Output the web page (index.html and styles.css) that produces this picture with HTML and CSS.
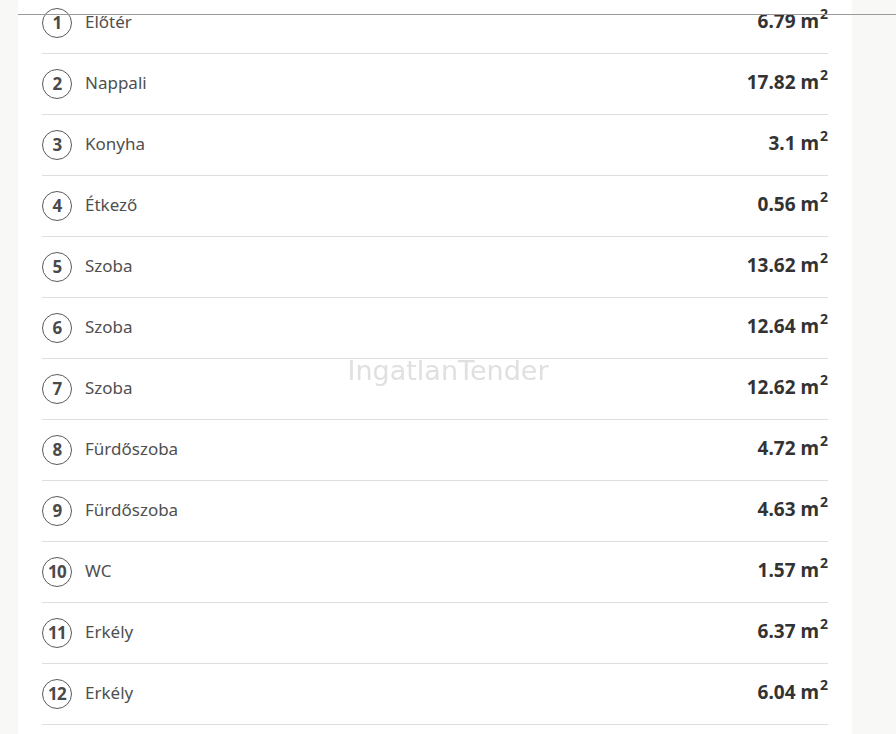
FILE: index.html
```html
<!DOCTYPE html>
<html lang="hu">
<head>
<meta charset="utf-8">
<link rel="stylesheet" href="styles.css">
</head>
<body>
<div class="page">
  <div class="card">
    <ul class="rooms">
      <li class="room"><span class="num">1</span><span class="name">Előtér</span><span class="area">6.79 m<sup>2</sup></span></li>
      <li class="room"><span class="num">2</span><span class="name">Nappali</span><span class="area">17.82 m<sup>2</sup></span></li>
      <li class="room"><span class="num">3</span><span class="name">Konyha</span><span class="area">3.1 m<sup>2</sup></span></li>
      <li class="room"><span class="num">4</span><span class="name">Étkező</span><span class="area">0.56 m<sup>2</sup></span></li>
      <li class="room"><span class="num">5</span><span class="name">Szoba</span><span class="area">13.62 m<sup>2</sup></span></li>
      <li class="room"><span class="num">6</span><span class="name">Szoba</span><span class="area">12.64 m<sup>2</sup></span></li>
      <li class="room"><span class="num">7</span><span class="name">Szoba</span><span class="area">12.62 m<sup>2</sup></span></li>
      <li class="room"><span class="num">8</span><span class="name">Fürdőszoba</span><span class="area">4.72 m<sup>2</sup></span></li>
      <li class="room"><span class="num">9</span><span class="name">Fürdőszoba</span><span class="area">4.63 m<sup>2</sup></span></li>
      <li class="room"><span class="num">10</span><span class="name">WC</span><span class="area">1.57 m<sup>2</sup></span></li>
      <li class="room"><span class="num">11</span><span class="name">Erkély</span><span class="area">6.37 m<sup>2</sup></span></li>
      <li class="room"><span class="num">12</span><span class="name">Erkély</span><span class="area">6.04 m<sup>2</sup></span></li>
    </ul>
  </div>
</div>
<div class="topline"></div>
<div class="watermark">IngatlanTender</div>
</body>
</html>
```

FILE: styles.css
```css
html, body {
  margin: 0;
  padding: 0;
  height: 100%;
  overflow: hidden;
  background: #f8f8f6;
  font-family: "Noto Sans", "DejaVu Sans", sans-serif;
}
.page {
  padding: 0 44px 0 18px;
}
.card {
  background: #fff;
  padding: 0 24px;
  height: 760px;
  margin-top: -7px;
}
.rooms {
  list-style: none;
  margin: 0;
  padding: 0;
}
.room {
  display: flex;
  align-items: center;
  height: 60px;
  border-bottom: 1px solid #dedede;
}
.num {
  box-sizing: border-box;
  width: 30px;
  height: 30px;
  border: 1px solid #5a5a5a;
  border-radius: 50%;
  display: flex;
  align-items: center;
  justify-content: center;
  font-weight: 700;
  font-size: 17px;
  color: #4a4a4a;
  letter-spacing: -0.8px;
  padding-bottom: 1px;
}
.name {
  margin-left: 13px;
  font-size: 17px;
  color: #4f4f4f;
  flex: 1;
  padding-bottom: 4px;
}
.area {
  font-weight: 700;
  font-size: 19px;
  color: #333;
  letter-spacing: 0;
  padding-bottom: 4px;
}
.area sup {
  font-size: 14px;
  line-height: 0;
  vertical-align: 9px;
  margin-left: 1px;
}
.topline {
  position: fixed;
  left: 18px;
  right: 0;
  top: 14px;
  height: 1px;
  background: #9a9a9a;
}
.watermark {
  position: fixed;
  left: 0;
  right: 0;
  top: 355px;
  text-align: center;
  font-family: "DejaVu Sans", sans-serif;
  font-size: 27px;
  color: #e0e0e0;
  pointer-events: none;
}
```
